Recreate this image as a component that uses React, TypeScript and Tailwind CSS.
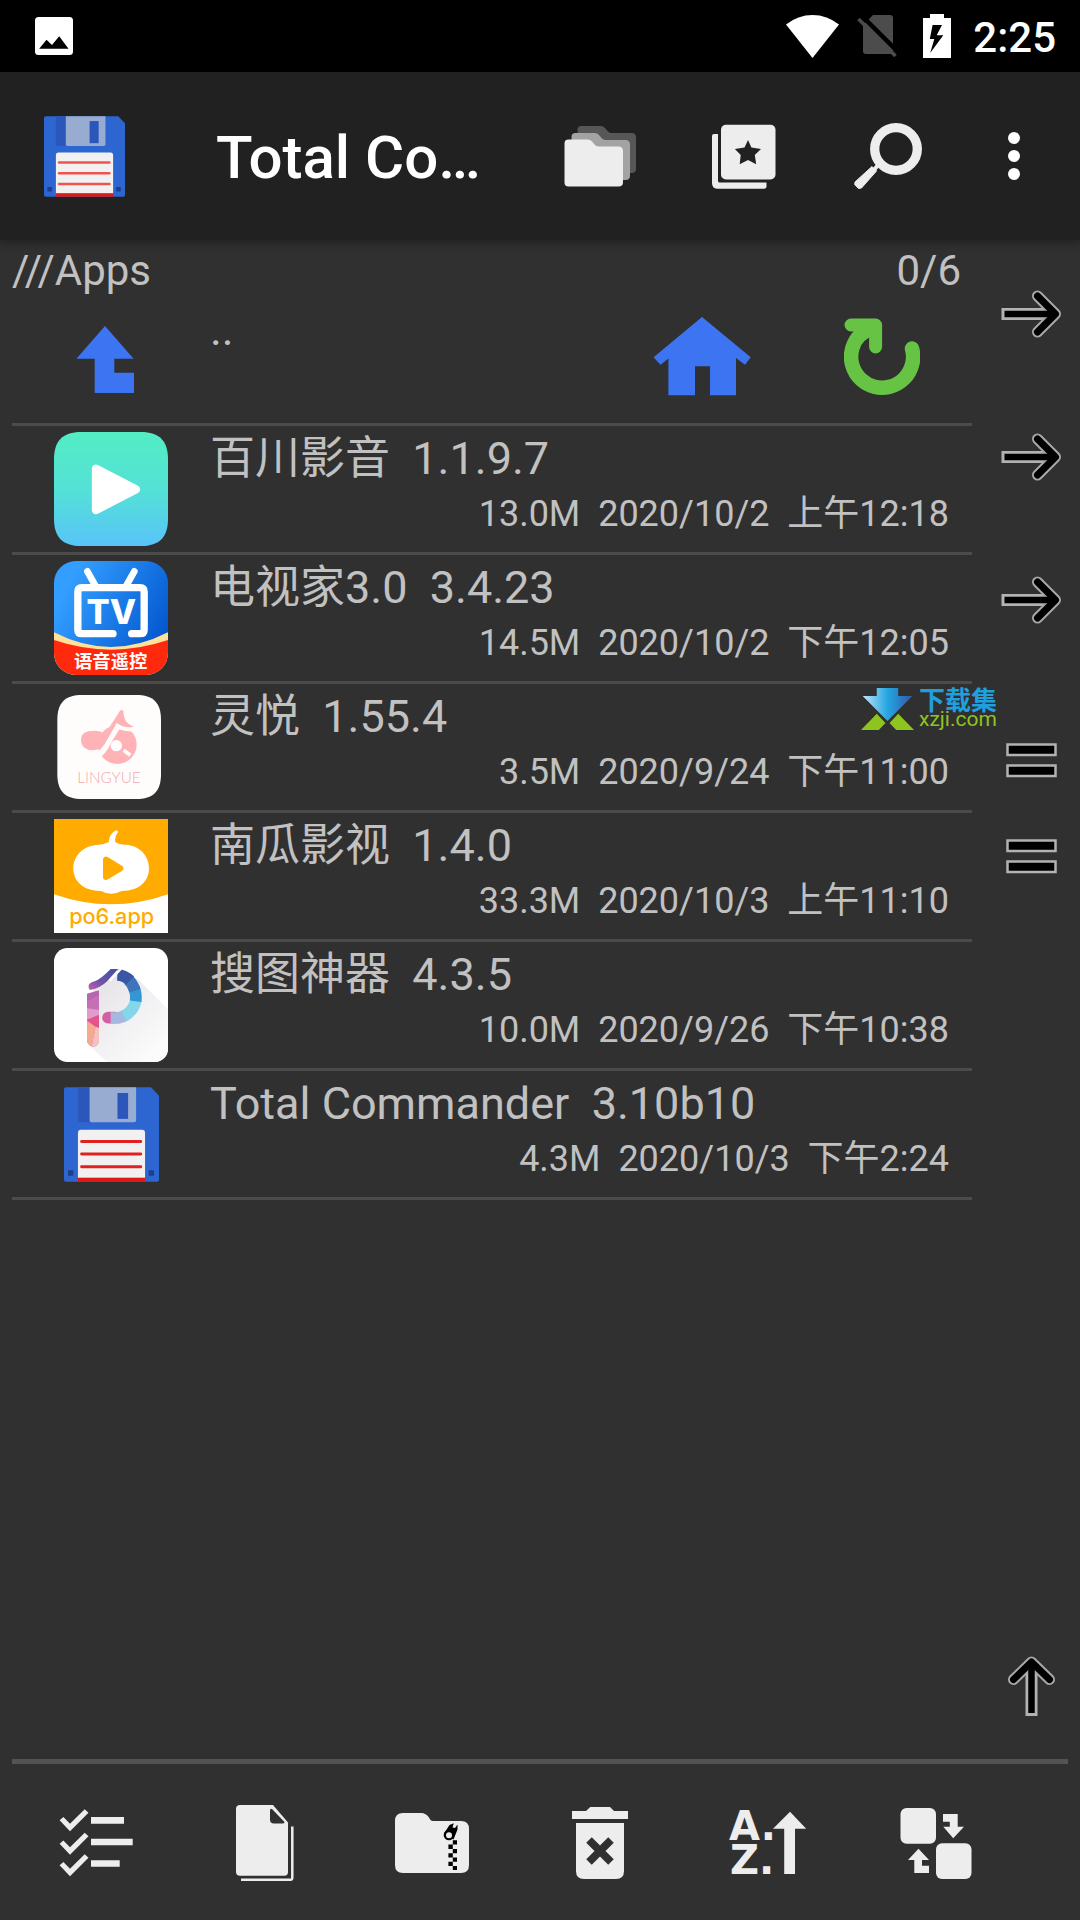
import type { ReactNode } from 'react';

const INK = '#ededed';

/* ---------- status bar ---------- */

function StatusBar() {
  return (
    <header className="flex h-[72px] items-center bg-black pl-[35px] pr-6 text-white">
      <svg width="38" height="38" viewBox="0 0 38 38" role="img" aria-label="Screenshot saved">
        <rect width="38" height="38" rx="3.5" fill="#fff" />
        <path d="M4.2 31.7 11.5 22.7 17 28 24.2 19.3 33.5 31.7Z" fill="#000" />
      </svg>
      <div className="ml-auto flex items-center">
        <svg width="53" height="43" viewBox="0 0 53 43" role="img" aria-label="Wi-Fi">
          <path d="M26.5 43 0 9.5Q12 0 26.5 0T53 9.5Z" fill="#fff" />
        </svg>
        <svg className="ml-[18px]" width="40" height="42" viewBox="0 0 40 42" role="img" aria-label="No SIM">
          <path d="M16 0H33Q36 0 36 3V36Q36 39 33 39H9Q6 39 6 36V10Z" fill="#4c4c4c" />
          <path d="M4 0 40 36" stroke="#000" strokeWidth="4.5" />
          <path d="M1.5 4 38.5 41" stroke="#4c4c4c" strokeWidth="3.6" />
        </svg>
        <svg className="ml-[26px]" width="28" height="44" viewBox="0 0 28 44" role="img" aria-label="Battery charging">
          <path d="M0 4H7V0H21V4H28V44H0Z" fill="#fff" />
          <path d="M9.6 11H19L13.7 21.3H20.3L7.2 39 11.3 25H6.8Z" fill="#000" />
        </svg>
        <span className="ml-[22px] pt-1 text-[42px] font-medium leading-[50px]">2:25</span>
      </div>
    </header>
  );
}

/* ---------- icons ---------- */

function Floppy({ size, line }: { size: number; line: string }) {
  return (
    <svg width={size} height={size} viewBox="29 28 286 286" aria-hidden="true">
      <path d="M29 35Q29 29 35 29H291L315 54V307Q315 313 309 313H35Q29 313 29 307Z" fill="#2d66d0" />
      <path d="M71 29H110V134H78Q71 134 71 127Z" fill="#2b57ba" />
      <path d="M106 29H246V128Q246 134 240 134H112Q106 134 106 128Z" fill="#98acd1" />
      <rect x="190" y="46" width="32" height="78" fill="#2b57ba" />
      <path d="M71 166Q71 157 80 157H264Q273 157 273 166V302H71Z" fill="#f1f1f1" />
      <rect x="71" y="301" width="202" height="12" fill="#df1a16" />
      <path d="M82 192H260M82 230H260M82 268H260" stroke={line} strokeWidth="9" strokeLinecap="round" />
      <path d="M41 279h16v16H41ZM284 279h16v16h-16Z" fill="#1c3f8c" />
    </svg>
  );
}

const FOLDER =
  'M4 0H23Q26 0 27.500 2L30 5Q31.500 7 34 7H54Q58.500 7 58.500 11.500V43Q58.500 47 54 47H4Q0 47 0 43V4Q0 0 4 0Z';

function FoldersIcon() {
  return (
    <svg width="72" height="61" viewBox="0 0 72 61" aria-hidden="true">
      <path d={FOLDER} transform="translate(13.500 0)" fill="#575757" />
      <path d={FOLDER} transform="translate(7.500 7)" fill="#a3a3a3" />
      <path d={FOLDER} transform="translate(0.500 13.500)" fill={INK} />
    </svg>
  );
}

function BookmarksIcon() {
  return (
    <svg width="64" height="65" viewBox="0 0 64 65" aria-hidden="true">
      <rect x="9" y="0.7" width="54.500" height="54.800" rx="5" fill={INK} />
      <path d="M2 10H6V57Q6 58.500 8 58.500H54.500V62Q54.500 64.700 52 64.700H5Q0 64.700 0 59V12Q0 10 2 10Z" fill={INK} />
      <path
        d="M36 16 39.400 23.400 49 25 42.800 31 44.200 40.300 36 36 27.700 40.300 28.700 31 22.900 25 32.500 23.400Z"
        fill="#212121"
      />
    </svg>
  );
}

function SearchIcon() {
  return (
    <svg width="68" height="66" viewBox="0 0 68 66" aria-hidden="true">
      <circle cx="42" cy="26" r="21.300" fill="none" stroke={INK} strokeWidth="9.300" />
      <path d="M24 42 20 47" stroke={INK} strokeWidth="4" />
      <path d="M18 43.500 22.500 48 7.500 65 4.500 65.500 0.700 61.500 1 59Z" fill={INK} stroke={INK} strokeLinejoin="round" />
    </svg>
  );
}

function MoreIcon() {
  return (
    <svg width="12" height="48" viewBox="0 0 12 48" aria-hidden="true">
      <circle cx="6" cy="6" r="6" fill="#fff" />
      <circle cx="6" cy="24" r="6" fill="#fff" />
      <circle cx="6" cy="42" r="6" fill="#fff" />
    </svg>
  );
}

function ParentIcon() {
  return (
    <svg width="58" height="67" viewBox="0 0 58 67" aria-hidden="true">
      <path d="M29 0 57.600 32.700H38.300V46.700H58V67H18.700V32.700H0.400Z" fill="#3d74f2" />
    </svg>
  );
}

function HomeIcon() {
  return (
    <svg width="98" height="79" viewBox="0 0 98 79" aria-hidden="true">
      <path
        d="M49 0 97.700 40.300 92 47.700 83 41V78.300H57V49.300H42V78.300H15.400V41.500L7.500 47.700 0.600 40.300Z"
        fill="#3d74f2"
      />
    </svg>
  );
}

function RefreshIcon() {
  return (
    <svg
      width="76"
      height="77"
      viewBox="0 0 76 77"
      fill="none"
      stroke="#66c344"
      strokeLinecap="round"
      strokeLinejoin="round"
      aria-hidden="true"
    >
      <path d="M68 30.500A31 31 0 1 1 16 17" strokeWidth="14.500" />
      <path d="M7 7H31.600V29" strokeWidth="13" />
      <path d="M17 16 27 9" strokeWidth="15" />
    </svg>
  );
}

function ArrowIcon({ up = false }: { up?: boolean }) {
  const shaft = up ? 'M24.500 61V12' : 'M0.500 25H50';
  const core = up ? 'M24.500 58V12' : 'M3.500 25H50';
  const head = up ? 'M6.500 24.500 24.500 7 42.500 24.500' : 'M36.500 7 54.500 25 36.500 43';
  return (
    <svg
      width={up ? 49 : 61}
      height={up ? 62 : 50}
      viewBox={up ? '0 0 49 62' : '0 0 61 50'}
      fill="none"
      strokeLinejoin="round"
      aria-hidden="true"
    >
      <path d={shaft} stroke="#b2b2b2" strokeWidth="12" />
      <path d={head} stroke="#a8a8a8" strokeWidth="11" strokeLinecap="round" />
      <path d={core} stroke="#000" strokeWidth="6.500" />
      <path d={head} stroke="#000" strokeWidth="7" strokeLinecap="round" />
    </svg>
  );
}

function EqualsIcon() {
  return (
    <svg width="51" height="35" viewBox="0 0 51 35" fill="#000" stroke="#b2b2b2" strokeWidth="2.500" aria-hidden="true">
      <rect x="1.500" y="1.500" width="48" height="10.500" />
      <rect x="1.500" y="22.500" width="48" height="10.500" />
    </svg>
  );
}

const CHECK = 'M0.600 11.300 4.400 8 11 14.700 25.700 0.300 29.500 3.700 11 22.300Z';

function SelectIcon() {
  return (
    <svg width="74" height="68" viewBox="0 0 74 68" fill={INK} aria-hidden="true">
      <path d={CHECK} />
      <path d={CHECK} transform="translate(0 23.500)" />
      <path d={CHECK} transform="translate(0 45)" />
      <path d="M32 8H65V14.700H32ZM32 29.700H73.700V36.200H32ZM32 51.300H60.700V57.800H32Z" />
    </svg>
  );
}

function CopyIcon() {
  return (
    <svg width="59" height="76" viewBox="0 0 59 76" aria-hidden="true">
      <path d="M5 0H38L53 17.500V67Q53 70.700 49.500 70.700H5Q1 70.700 1 67V4Q1 0 5 0Z" fill={INK} />
      <path d="M35 6Q35 2.500 37.500 4.500L49.500 17Q49.500 18.500 47.500 18.500H39Q35 18.500 35 14.500Z" fill="#303030" />
      <path d="M57.300 21.500V73Q57.300 74.800 55.500 74.800H6" fill="none" stroke={INK} strokeWidth="2.500" />
    </svg>
  );
}

function ZipIcon() {
  return (
    <svg width="74" height="60" viewBox="0 0 74 60" aria-hidden="true">
      <path
        d="M8 0H26Q31 0 34 4.500 35.500 8 38 8H66Q74 8 74 16V52Q74 60 66 60H8Q0 60 0 52V8Q0 0 8 0Z"
        fill={INK}
      />
      <path
        d="M57.800 27.300H62V31.600H57.800ZM53.400 31.600H57.800V35.900H53.400ZM57.800 35.900H62V40.200H57.800ZM53.400 40.200H57.800V44.500H53.400ZM57.800 44.500H62V48.800H57.800ZM53.400 48.800H57.800V53H53.400ZM57.800 53H62V57H57.800Z"
        fill="#000"
      />
      <path d="M49 20.500 54.500 12 58.800 10.300 57.500 14.500 60 15 62.500 11.500V16.500L58.500 26.500Z" fill="#000" />
      <circle cx="54" cy="22" r="5.300" fill="#000" />
      <circle cx="54" cy="22.300" r="3" fill={INK} />
    </svg>
  );
}

function TrashIcon() {
  return (
    <svg width="56" height="72" viewBox="0 0 56 72" aria-hidden="true">
      <path d="M18.300 0H38L42 4H56V12H0V4H14Z" fill={INK} />
      <path d="M4 16H52V64Q52 72 44 72H12Q4 72 4 64Z" fill={INK} />
      <path d="M17 33 39 55M39 33 17 55" stroke="#303030" strokeWidth="7.800" />
    </svg>
  );
}

function SortIcon() {
  return (
    <svg width="78" height="68" viewBox="0 -1 78 68" fill={INK} overflow="visible" aria-hidden="true">
      <text x="0" y="30" fontFamily="'DejaVu Sans', sans-serif" fontSize="40" fontWeight="700">A.</text>
      <text x="1" y="64" fontFamily="'DejaVu Sans', sans-serif" fontSize="40" fontWeight="700">Z.</text>
      <path d="M61 1.700 77.200 18.700H66V64H55.200V18.700H44Z" />
    </svg>
  );
}

function SwapIcon() {
  return (
    <svg width="72" height="71" viewBox="0 0 72 71" fill={INK} aria-hidden="true">
      <rect x="0.500" width="35.500" height="35.700" rx="6" />
      <rect x="36" y="35.300" width="35.500" height="35.700" rx="6" />
      <path d="M43 6H57.700V18.700H64L53.200 30.300 43.300 18.700H49.800V13.700H43Z" />
      <path d="M18.500 40.700 29 52H22V57.700H29V65H14.300V52H8Z" />
    </svg>
  );
}

/* ---------- launcher icons ---------- */

function AppSvg({ children }: { children: ReactNode }) {
  return (
    <svg width="114" height="114" viewBox="0 0 342 342" aria-hidden="true">
      {children}
    </svg>
  );
}

function BaichuanIcon() {
  return (
    <AppSvg>
      <defs>
        <linearGradient id="bc" x1="0" y1="0" x2="0" y2="1">
          <stop offset="0" stopColor="#53edc4" />
          <stop offset="0.500" stopColor="#54e1d6" />
          <stop offset="1" stopColor="#58c4f9" />
        </linearGradient>
      </defs>
      <path
        d="M82 0H260C318 0 342 28 342 82V260C342 314 318 342 260 342H82C24 342 0 314 0 260V82C0 28 24 0 82 0Z"
        fill="url(#bc)"
      />
      <path d="M126 110V234L246 172Z" fill="#fff" stroke="#fff" strokeWidth="25" strokeLinejoin="round" />
    </AppSvg>
  );
}

function DianshijiaIcon() {
  return (
    <AppSvg>
      <defs>
        <linearGradient id="tv" x1="0" y1="0.200" x2="1" y2="0.750">
          <stop offset="0.100" stopColor="#339eff" />
          <stop offset="1" stopColor="#0052cb" />
        </linearGradient>
        <clipPath id="tvClip">
          <rect width="342" height="342" rx="66" />
        </clipPath>
      </defs>
      <g clipPath="url(#tvClip)">
        <rect width="342" height="342" fill="url(#tv)" />
        <path d="M0 214Q171 302 342 214V342H0Z" fill="#ffe19a" />
        <path d="M0 237Q171 295 342 237V342H0Z" fill="#ff2a0e" />
      </g>
      <g fill="none" stroke="#fff" strokeLinecap="round">
        <path
          d="M177 218H84Q71.500 218 71.500 206V92Q71.500 80 84 80H258Q270.500 80 270.500 92V206Q270.500 218 258 218H233"
          strokeWidth="22"
        />
        <path d="M100 31 123 72M241 31 218 72" strokeWidth="20" />
      </g>
      <text
        x="172"
        y="189"
        textAnchor="middle"
        fill="#fff"
        fontFamily="Inter, sans-serif"
        fontSize="103"
        fontWeight="800"
      >
        TV
      </text>
      <text
        x="170"
        y="321"
        textAnchor="middle"
        fill="#fff"
        fontFamily="'Noto Sans CJK SC', sans-serif"
        fontSize="55"
        fontWeight="700"
      >
        语音遥控
      </text>
    </AppSvg>
  );
}

function LingyueIcon() {
  return (
    <AppSvg>
      <path
        d="M85 15H246C298 15 321 38 321 90V252C321 304 298 327 246 327H85C33 327 10 304 10 252V90C10 38 33 15 85 15Z"
        fill="#fffdfb"
      />
      <circle cx="190" cy="164" r="58" fill="#ffb3b7" />
      <path d="M126 200Q150 186 163 156L192 108Q215 118 246 116" fill="none" stroke="#fffdfb" strokeWidth="17" />
      <circle cx="187" cy="167" r="17" fill="#fffdfb" />
      <path d="M209 181 229 196" stroke="#fffdfb" strokeWidth="11" />
      <path
        d="M81 150C81 128 98 123 115 123Q132 121 144 127L151 136 197 64Q202 57 208 62 207 99 239 110 212 116 188 99L152 162Q140 181 112 181C94 179 81 168 81 150Z"
        fill="#ffb3b7"
      />
      <text
        x="165"
        y="280"
        textAnchor="middle"
        fill="#f0a9ad"
        fontFamily="Lato, sans-serif"
        fontSize="46"
        fontWeight="300"
      >
        LINGYUE
      </text>
    </AppSvg>
  );
}

function NanguaIcon() {
  return (
    <AppSvg>
      <rect width="342" height="342" fill="#ffab00" />
      <path d="M0 226Q171 286 342 226V342H0Z" fill="#fff" />
      <path
        d="M164 70Q165 44 187 33 193 35 192 40 181 54 184 70 196 77 210 77C254 77 285 108 285 148 285 190 252 216 205 216 196 217 189 224 172 224 155 224 148 217 139 216 92 216 58 190 58 148 58 108 90 79 134 77 150 77 156 71 164 70Z"
        fill="#fff"
      />
      <path d="M156 122V174L199 148Z" fill="#ffab00" stroke="#ffab00" strokeWidth="18" strokeLinejoin="round" />
      <text
        x="173"
        y="315"
        textAnchor="middle"
        fill="#ffab00"
        fontFamily="Inter, sans-serif"
        fontSize="65"
        fontWeight="500"
      >
        po6.app
      </text>
    </AppSvg>
  );
}

function SoutuIcon() {
  return (
    <AppSvg>
      <defs>
        <linearGradient id="stShade" x1="0.200" y1="0.200" x2="0.800" y2="0.900">
          <stop offset="0" stopColor="#e9e6ea" />
          <stop offset="1" stopColor="#fbfbfb" />
        </linearGradient>
        <linearGradient id="stCap" x1="0" y1="1" x2="1" y2="0">
          <stop offset="0" stopColor="#c45fb0" />
          <stop offset="0.400" stopColor="#6d55a6" />
          <stop offset="1" stopColor="#3f52a2" />
        </linearGradient>
        <clipPath id="stClip">
          <rect width="342" height="342" rx="40" />
        </clipPath>
        <clipPath id="stStem">
          <path d="M99 137 135 127V279Q133 292 118 297 102 293 99 279Z" />
        </clipPath>
      </defs>
      <g clipPath="url(#stClip)">
        <rect width="342" height="342" fill="#fff" />
        <path d="M118 120 190 70 250 92 342 184V342H158L106 291Z" fill="url(#stShade)" />
      </g>
      <g clipPath="url(#stStem)">
        <rect x="99" y="120" width="36" height="180" fill="#b765ae" />
        <path d="M99 160 135 140V190L99 181Z" fill="#c56fb4" />
        <path d="M99 181 135 186V205L99 222Z" fill="#e29ccb" />
        <path d="M99 215 135 200V240L99 222Z" fill="#e5528f" />
        <path d="M99 218 125 236 112 300H99Z" fill="#f5a98f" />
        <path d="M125 236 135 240V300H112Z" fill="#f4c0c0" />
      </g>
      <path d="M104 112Q106 104 122 100 142 92 170 63H192L160 99Q140 120 108 126 102 120 104 112Z" fill="url(#stCap)" />
      <g fill="none" strokeWidth="35">
        <path d="M162 209H182" stroke="#d65fa4" strokeLinecap="round" />
        <path d="M170 210H184Q202 210 216 200" stroke="#a6b8dd" />
        <path d="M210 204Q240 188 246 156" stroke="#84d6ea" />
        <path d="M245 160Q248 138 240 120" stroke="#3497d4" />
        <path d="M243 128Q236 106 222 94" stroke="#3d74bb" />
        <path d="M228 98Q212 82 190 81" stroke="#3c56a6" />
      </g>
      <path d="M167 98 201 62" stroke="#fff" strokeWidth="7" />
    </AppSvg>
  );
}

function CommanderIcon() {
  return <Floppy size={95} line="#e0211f" />;
}

/* ---------- data ---------- */

type Entry = { name: string; info: string; Icon: () => ReactNode };

const entries: Entry[] = [
  { name: '百川影音  1.1.9.7', info: '13.0M  2020/10/2  上午12:18', Icon: BaichuanIcon },
  { name: '电视家3.0  3.4.23', info: '14.5M  2020/10/2  下午12:05', Icon: DianshijiaIcon },
  { name: '灵悦  1.55.4', info: '3.5M  2020/9/24  下午11:00', Icon: LingyueIcon },
  { name: '南瓜影视  1.4.0', info: '33.3M  2020/10/3  上午11:10', Icon: NanguaIcon },
  { name: '搜图神器  4.3.5', info: '10.0M  2020/9/26  下午10:38', Icon: SoutuIcon },
  { name: 'Total Commander  3.10b10', info: '4.3M  2020/10/3  下午2:24', Icon: CommanderIcon },
];

const actions = [
  { label: 'Select', Icon: SelectIcon },
  { label: 'Copy', Icon: CopyIcon },
  { label: 'Pack', Icon: ZipIcon },
  { label: 'Delete', Icon: TrashIcon },
  { label: 'Sort', Icon: SortIcon },
  { label: 'Swap panels', Icon: SwapIcon },
];

/* ---------- page parts ---------- */

function Toolbar() {
  return (
    <div className="relative z-10 flex h-[168px] items-center bg-[#212121] pl-11 pr-3 text-white shadow-[0_2px_10px_rgba(0,0,0,0.4)]">
      <Floppy size={81} line="#ef5350" />
      <h1 className="ml-[91px] min-w-0 flex-1 whitespace-nowrap pt-1 text-[60px] font-medium leading-[72px]">
        Total Co…
      </h1>
      <button type="button" aria-label="Folder history" className="flex h-36 w-36 items-center justify-center">
        <FoldersIcon />
      </button>
      <button type="button" aria-label="Bookmarks" className="flex h-36 w-36 items-center justify-center">
        <BookmarksIcon />
      </button>
      <button type="button" aria-label="Search" className="flex h-36 w-36 items-center justify-center">
        <SearchIcon />
      </button>
      <button type="button" aria-label="More options" className="flex h-36 w-[108px] items-center justify-center">
        <MoreIcon />
      </button>
    </div>
  );
}

function Watermark() {
  return (
    <div className="absolute left-[849px] top-[4px] flex items-center gap-[5px] whitespace-nowrap">
      <svg width="53" height="42" viewBox="0 0 158 125" aria-hidden="true">
        <defs>
          <linearGradient id="wm" x1="0" y1="0" x2="1" y2="0">
            <stop offset="0" stopColor="#c0e6fb" />
            <stop offset="0.500" stopColor="#25a6e1" />
            <stop offset="1" stopColor="#2f58a8" />
          </linearGradient>
        </defs>
        <path d="M47 0H111V24H153L79 98 5 24H47Z" fill="url(#wm)" />
        <path d="M0 125 47 77 73 104 53 125ZM158 125 111 77 85 104 105 125Z" fill="#8fc31f" />
      </svg>
      <div>
        <div className="font-['Noto_Sans_CJK_SC',sans-serif] text-[26px] font-bold leading-[20px] text-[#1f9fdc]">
          下载集
        </div>
        <div className="font-['Roboto',sans-serif] text-[21px] leading-[21px] text-[#8fc31f]">xzji.com</div>
      </div>
    </div>
  );
}

function FilePanel() {
  return (
    <section className="min-w-0 flex-1 pl-3 text-[#c1c1c1]">
      <div className="flex justify-between pr-[11px] pt-1 text-[42px] leading-[53px]">
        <span>///Apps</span>
        <span>0/6</span>
      </div>
      <div className="flex h-[129px] border-b-[3px] border-[#4b4b4b] pl-[42px]">
        <button type="button" className="flex flex-1 items-start text-left">
          <span className="flex h-full w-[114px] items-center justify-center pb-0.5 pr-3">
            <ParentIcon />
          </span>
          <span className="pl-[42px] pt-1.5 text-[45px] leading-[53px]">..</span>
        </button>
        <button type="button" aria-label="Home" className="flex w-[180px] items-center justify-center pb-2">
          <HomeIcon />
        </button>
        <button type="button" aria-label="Refresh" className="flex w-[180px] items-center justify-center pb-2">
          <RefreshIcon />
        </button>
      </div>
      <ul>
        {entries.map(({ name, info, Icon }, i) => (
          <li key={name} className="relative border-b-[3px] border-[#4b4b4b]">
            <button type="button" className="flex w-full py-1.5 pl-[42px] pr-[23px] text-left">
              <span className="flex h-[114px] w-[114px] items-center justify-center">
                <Icon />
              </span>
              <span className="min-w-0 flex-1 whitespace-pre pl-[42px]">
                <span className="block text-[45px] leading-[53px]">{name}</span>
                <span className="block text-right text-[36px] leading-[59px]">{info}</span>
              </span>
            </button>
            {i === 2 && <Watermark />}
          </li>
        ))}
      </ul>
    </section>
  );
}

function SideButtons() {
  return (
    <aside className="flex w-[108px] flex-col pb-[9px] pl-2.5 pt-0.5">
      {['Copy to other panel', 'Move to other panel', 'Open in other panel'].map((label) => (
        <button key={label} type="button" aria-label={label} className="flex h-[143px] items-center justify-center">
          <ArrowIcon />
        </button>
      ))}
      <div className="mt-[41px] flex flex-col">
        {['Same folder right', 'Same folder left'].map((label) => (
          <button key={label} type="button" aria-label={label} className="flex h-24 items-center justify-center">
            <EqualsIcon />
          </button>
        ))}
      </div>
      <button type="button" aria-label="Scroll to top" className="mt-auto flex h-32 items-center justify-center">
        <ArrowIcon up />
      </button>
    </aside>
  );
}

export default function App() {
  return (
    <div className="flex min-h-screen flex-col bg-[#303030] font-['Roboto','Noto_Sans_CJK_SC',sans-serif]">
      <StatusBar />
      <Toolbar />
      <main className="flex flex-1">
        <FilePanel />
        <SideButtons />
      </main>
      <nav className="mx-3 grid h-[161px] grid-cols-6 border-t-[5px] border-[#535353] pr-12 pt-0.5">
        {actions.map(({ label, Icon }) => (
          <button key={label} type="button" aria-label={label} className="flex items-center justify-center">
            <Icon />
          </button>
        ))}
      </nav>
    </div>
  );
}
